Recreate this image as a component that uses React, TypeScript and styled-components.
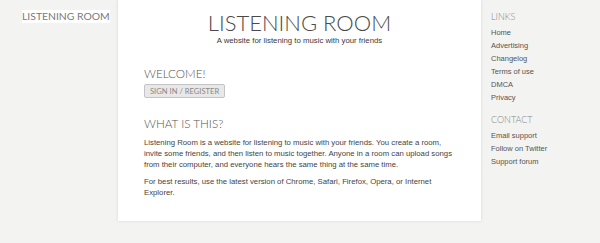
import { createGlobalStyle, styled } from "styled-components";

const GlobalStyle = createGlobalStyle`
  html, body {
    margin: 0;
    padding: 0;
    background: #f3f3f1;
  }
  body {
    font-family: "Liberation Sans", Arial, sans-serif;
    color: #444;
  }
`;

const links = ["Home", "Advertising", "Changelog", "Terms of use", "DMCA", "Privacy"];
const contact = ["Email support", "Follow on Twitter", "Support forum"];

function App() {
  return (
    <>
      <GlobalStyle />
      <Page>
        <LeftColumn>
          <SmallLogo>LISTENING ROOM</SmallLogo>
        </LeftColumn>
        <Main>
          <Header>
            <Title>LISTENING ROOM</Title>
            <Tagline>A website for listening to music with your friends</Tagline>
          </Header>
          <Section>
            <Heading>WELCOME!</Heading>
            <SignIn>SIGN IN / REGISTER</SignIn>
          </Section>
          <Section>
            <Heading>WHAT IS THIS?</Heading>
            <Paragraph>
              Listening Room is a website for listening to music with your friends. You create a room,
              invite some friends, and then listen to music together. Anyone in a room can upload songs
              from their computer, and everyone hears the same thing at the same time.
            </Paragraph>
            <Paragraph>
              For best results, use the latest version of Chrome, Safari, Firefox, Opera, or Internet
              Explorer.
            </Paragraph>
          </Section>
        </Main>
        <Sidebar>
          <SideGroup>
            <SideHeading>LINKS</SideHeading>
            {links.map((l) => (
              <SideLink key={l}>{l}</SideLink>
            ))}
          </SideGroup>
          <SideGroup>
            <SideHeading>CONTACT</SideHeading>
            {contact.map((l) => (
              <SideLink key={l}>{l}</SideLink>
            ))}
          </SideGroup>
        </Sidebar>
      </Page>
    </>
  );
}

export default App;

const Page = styled.div`
  display: flex;
  align-items: flex-start;
  width: 600px;
  height: 243px;
  overflow: hidden;
`;

const LeftColumn = styled.div`
  width: 118px;
  flex-shrink: 0;
  padding-top: 6px;
  padding-left: 22px;
  box-sizing: border-box;
`;

const SmallLogo = styled.div`
  display: inline-block;
  background: #fff;
  font-family: Lato, sans-serif;
  font-weight: 400;
  font-size: 10.4px;
  line-height: 13px;
  color: #7a7a7a;
`;

const Main = styled.main`
  width: 363px;
  flex-shrink: 0;
  height: 221px;
  background: #fff;
  box-shadow: 0 0 3px rgba(0, 0, 0, 0.12);
  padding: 0 26px;
  box-sizing: border-box;
`;

const Header = styled.header`
  text-align: center;
  padding-top: 12px;
  margin-bottom: 20px;
`;

const Title = styled.h1`
  margin: 0 0 2px;
  font-family: Lato, sans-serif;
  font-weight: 300;
  font-size: 22px;
  line-height: 22px;
  color: #4a4a4a;
`;

const Tagline = styled.div`
  font-size: 7.8px;
  line-height: 10px;
  color: #3a3a3a;
`;

const Section = styled.section`
  & + & {
    margin-top: 18px;
  }
`;

const Heading = styled.h2`
  margin: 0 0 4px;
  font-family: Lato, sans-serif;
  font-weight: 300;
  font-size: 11.7px;
  line-height: 14px;
  color: #555;
`;

const SignIn = styled.button`
  display: block;
  height: 14px;
  font-family: Lato, sans-serif;
  font-size: 7.6px;
  color: #888;
  background: #e8e8e8;
  border: 1px solid #c4c4c4;
  border-radius: 2px;
  padding: 0 5px;
  line-height: 12px;
`;

const Paragraph = styled.p`
  margin: 7px 0 0;
  font-size: 7.75px;
  line-height: 11px;
  color: #444;

  & + & {
    margin-top: 6px;
  }
`;

const Sidebar = styled.aside`
  padding-left: 10px;
  padding-top: 11px;
`;

const SideGroup = styled.div`
  & + & {
    margin-top: 10.5px;
  }
`;

const SideHeading = styled.div`
  font-family: Lato, sans-serif;
  font-weight: 300;
  font-size: 9px;
  line-height: 12px;
  color: #888;
  margin-bottom: 2.5px;
`;

const SideLink = styled.a`
  display: block;
  font-size: 7.5px;
  line-height: 13px;
  color: #555;
  text-decoration: none;
`;
